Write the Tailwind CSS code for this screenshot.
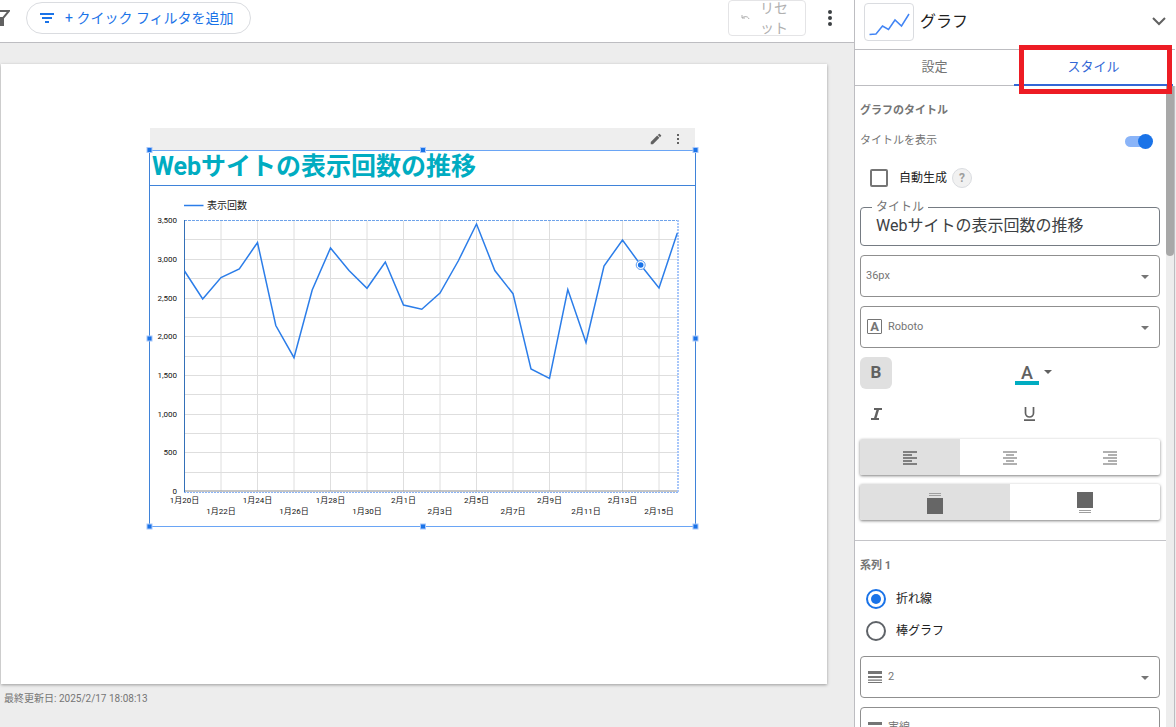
<!DOCTYPE html>
<html lang="ja">
<head>
<meta charset="utf-8">
<title>グラフ - スタイル</title>
<script src="https://cdn.jsdelivr.net/npm/@tailwindcss/browser@4"></script>
</head>
<body class="flex h-screen overflow-hidden bg-[#ededed] font-['Roboto','Noto_Sans_CJK_JP',sans-serif] text-[#757575]">

<main class="flex min-w-0 flex-1 flex-col">
  <header class="flex h-[43px] shrink-0 items-start overflow-hidden border-b border-[#bdbdc1] bg-white">
    <svg class="mt-2 h-5 w-[10px] shrink-0 text-[#616161]" viewBox="0 0 10 20" fill="none" stroke="currentColor" stroke-width="2" aria-hidden="true"><path d="M-4 3H9L3 10V17H-1"/><path d="M0 9H3V18H0Z" fill="currentColor" stroke="none"/></svg>
    <button class="mt-[2px] ml-4 flex h-8 shrink-0 items-center rounded-full border border-[#dadce0] pr-4 pl-[13px] text-sm text-[#1a73e8]">
      <svg class="mr-[11px] h-[10px] w-[14px]" viewBox="0 0 14 10" fill="currentColor" aria-hidden="true"><path d="M0 0h14v2H0zM2 4h10v2H2zM5 8h4v2H5z"/></svg>
      + クイック フィルタを追加
    </button>
    <button class="ml-auto flex h-9 w-[78px] shrink-0 items-center justify-between rounded border border-[#e4e4e6] pr-[17px] pl-3 text-sm leading-5 text-[#b0b0b0]" disabled>
      <svg class="h-2 w-[9px]" viewBox="0 0 9 8" fill="none" stroke="currentColor" aria-hidden="true"><path d="M1 1v3h3M1 4c2-2 6-2 7 1"/></svg>
      <span class="w-7">リセット</span>
    </button>
    <button class="mt-2 mr-[15px] ml-[15px] flex h-5 w-[18px] shrink-0 items-center justify-center" aria-label="その他のオプション">
      <svg class="h-4 w-1" viewBox="0 0 4 16" fill="#3c4043"><circle cx="2" cy="2" r="2"/><circle cx="2" cy="8" r="2"/><circle cx="2" cy="14" r="2"/></svg>
    </button>
  </header>

  <section class="relative mt-[21px] mr-[27px] ml-px h-[620px] shrink-0 bg-white shadow-[0_1px_3px_rgba(0,0,0,0.35)]">
    <!-- Selected widget on the report canvas -->
    <div class="absolute top-16 left-[145px] w-[556px]">
      <div class="mr-[7px] ml-[4px] flex h-[22px] items-center justify-end gap-2 bg-[#eee] pr-[10px]">
        <button aria-label="編集"><svg class="h-[14px] w-[14px]" viewBox="0 0 24 24" fill="#616161"><path d="M3 17.25V21h3.75L17.81 9.94l-3.75-3.75L3 17.25zM20.71 7.04a1 1 0 0 0 0-1.41l-2.34-2.34a1 1 0 0 0-1.41 0l-1.83 1.83 3.75 3.75 1.83-1.83z"/></svg></button>
        <button class="flex h-[14px] w-[14px] items-center justify-center" aria-label="メニュー"><svg class="h-[10px] w-[3px]" viewBox="0 0 3 10" fill="#616161"><path d="M0 0h2v2H0zM0 4h2v2H0zM0 8h2v2H0z"/></svg></button>
      </div>
      <div class="h-9 pl-[6px]"><h1 class="text-[25px] leading-[34px] font-bold text-[#00acc1]">Webサイトの表示回数の推移</h1></div>
      <svg class="absolute top-4 left-0 h-[390px] w-[556px]" viewBox="146 144 556 390" role="img" aria-label="表示回数">
        <path id="grid" fill="none" stroke="#dedede" stroke-width="1"/>
        <path d="M184 491H678" stroke="#8a8a8a" stroke-width="1"/>
        <path d="M184 492.5H678" stroke="#8ab4f8" stroke-dasharray="2 1"/>
        <path d="M184 220.5H678" stroke="#6fa3ea" stroke-dasharray="3 1"/>
        <path d="M678 220V492" stroke="#a8c7fa" stroke-width="2" stroke-dasharray="2 1"/>
        <path d="M184.5 220V492" stroke="#3470b8"/>
        <path d="M184 205.500H203.500" stroke="#2b7de9" stroke-width="1.500"/>
        <text x="207" y="209" font-size="10" fill="#212121">表示回数</text>
        <polyline fill="none" stroke="#2b7de9" stroke-width="1.500" points="184.500,271 202.700,299 221,277.500 239.300,269 257.500,242.500 275.800,325.500 294,357.700 312.200,290 330.500,248 349,270.500 367,288.300 385.300,262 403.500,305 421.800,309.300 440,293 458.500,260.500 476.500,224 494.800,270.500 513,293.700 531,369 549.500,378.500 567.800,289.500 586,342.500 604,266 622.500,240 640.700,265 659,288 677.300,233"/>
        <circle cx="640.700" cy="265" r="4.500" fill="#fff" stroke="#5c9bf0"/><circle cx="640.700" cy="265" r="2.800" fill="#1a73e8"/>
        <g id="ylabels" font-size="8" fill="#111" text-anchor="end"></g>
        <g id="xlabels" font-size="8" fill="#111" text-anchor="middle"></g>
        <g fill="none"><path d="M150 150.500H696M150 526.500H696" stroke="#6aa5f5"/><path d="M150 185.500H696M149.500 150V527M695.500 150V527" stroke="#3f83d9"/></g>
        <g id="handles" fill="#1a73e8" stroke="#a8c7fa"></g>
      </svg>
    </div>
  </section>
  <p class="mt-2 ml-1 text-[10px] leading-[14px]">最終更新日: 2025/2/17 18:08:13</p>
</main>

<aside class="relative flex w-[322px] shrink-0 flex-col border-l border-[#bdbdc1] bg-white">
  <header class="mr-[1px] flex h-[50px] shrink-0 items-center border-b border-[#bdbdc1] pr-[9px] pl-[9px]">
    <svg class="mb-[5px] h-[38px] w-[50px] rounded border border-[#dadce0]" viewBox="0 0 48 36" fill="none" stroke="#4285f4" stroke-width="1.500" aria-hidden="true"><path d="M4.500 30.500L11 30L17.500 22L23.500 25.500L30 16L36.500 22L44 10"/></svg>
    <h2 class="mb-[6px] ml-[6px] flex-1 text-base text-[#212121]">グラフ</h2>
    <button class="mb-[6px]" aria-label="グラフの種類"><svg class="h-[9px] w-[14px]" viewBox="0 0 14 9" fill="none" stroke="#616161" stroke-width="2"><path d="M1 1l6 6 6-6"/></svg></button>
  </header>
  <nav class="mr-[3px] grid h-9 shrink-0 grid-cols-2 border-b border-[#bdbdc1] text-[13px]" role="tablist">
    <button class="pb-[2px]" role="tab">設定</button>
    <button class="-mb-px border-b-2 border-[#3367d6] pb-px text-[#3367d6]" role="tab" aria-selected="true">スタイル</button>
  </nav>
  <div class="pointer-events-none absolute top-[45px] right-[4px] z-10 h-[49px] w-[153px] border-[5px] border-[#ed1c24]"></div>

  <div class="flex min-h-0 flex-1">
    <div class="min-w-0 flex-1 overflow-hidden">
      <section class="pr-[6px] pl-[5px]">
        <h3 class="pt-[17px] text-[11px] leading-4 font-bold">グラフのタイトル</h3>
        <label class="mt-[14px] flex h-4 items-center justify-between pr-[7px] text-[11px]">タイトルを表示
          <span class="relative flex h-4 w-7 items-center">
            <input type="checkbox" role="switch" checked class="h-[11px] w-[26px] appearance-none rounded-full bg-[#8ab4f8]">
            <span class="absolute right-0 h-[15px] w-[15px] rounded-full bg-[#1a73e8]"></span>
          </span>
        </label>
        <div class="mt-[18px] flex h-[22px] items-center pl-[10px]">
          <input id="auto" type="checkbox" class="h-[18px] w-[18px] appearance-none rounded-[2px] border-2 border-[#757575]">
          <label for="auto" class="ml-[11px] text-xs text-[#212121]">自動生成</label>
          <button class="ml-[5px] h-5 w-5 rounded-full border border-[#dadce0] bg-[#f1f1f1] text-xs leading-4 font-bold text-[#9e9e9e]" aria-label="ヘルプ">?</button>
        </div>
        <fieldset class="mt-[10px] h-[47px] rounded border border-[#757b82] pl-[11px]">
          <legend class="px-1 text-xs leading-4"><label for="title">タイトル</label></legend>
          <input id="title" type="text" value="Webサイトの表示回数の推移" class="-mt-[1px] block h-6 w-full px-1 text-base text-[#3c4043] outline-none">
        </fieldset>
        <div class="relative mt-[9px]">
          <select aria-label="フォントサイズ" class="block h-[42px] w-full appearance-none rounded border border-[#8f8f8f] pl-[5px] text-[11px]"><option>36px</option></select>
          <svg class="pointer-events-none absolute top-5 right-[11px] h-1 w-2" viewBox="0 0 8 4" fill="#757575"><path d="M0 0h8L4 4z"/></svg>
        </div>
        <div class="relative mt-[9px]">
          <select aria-label="フォント" class="block h-[42px] w-full appearance-none rounded border border-[#8f8f8f] pl-[27px] text-[11px]"><option>Roboto</option></select>
          <span class="pointer-events-none absolute top-[13px] left-[7px] flex h-[15px] w-[15px] items-center justify-center rounded-[1px] border border-[#757575] text-[13px] leading-none font-bold" aria-hidden="true">A</span>
          <svg class="pointer-events-none absolute top-5 right-[11px] h-1 w-2" viewBox="0 0 8 4" fill="#757575"><path d="M0 0h8L4 4z"/></svg>
        </div>
        <div class="mt-[9px] grid grid-cols-2 gap-y-[9px] text-[#616161]">
          <button class="h-8 w-8 rounded-md bg-[#e0e0e0] text-[17px] font-bold" aria-label="太字" aria-pressed="true">B</button>
          <button class="flex h-8 w-12 items-start gap-[5px] pl-[5px]" aria-label="文字色">
            <span class="mt-[7px] h-[21px] w-6 border-b-4 border-[#00acc1] text-center text-[18px] leading-[18px] font-medium">A</span>
            <svg class="mt-[13px] h-1 w-2" viewBox="0 0 8 4" fill="#616161"><path d="M0 0h8L4 4z"/></svg>
          </button>
          <button class="flex h-8 w-8 items-center justify-center" aria-label="斜体"><svg class="h-3 w-[11px]" viewBox="0 0 11 12" fill="none" stroke="currentColor" stroke-width="2"><path d="M3 1h8M0 11h8"/><path d="M7 1L4 11" stroke-width="2.500"/></svg></button>
          <button class="flex h-8 w-[38px] items-center justify-center" aria-label="下線"><svg class="h-[14px] w-[11px]" viewBox="0 0 11 14" fill="none" stroke="currentColor" stroke-width="1.700"><path d="M1.500 0v6a4 4 0 0 0 8 0V0M0 13.200h11"/></svg></button>
        </div>
        <div class="mt-[9px] grid h-9 grid-cols-3 overflow-hidden rounded-[2px] shadow-[0_1px_3px_rgba(0,0,0,0.5)]">
          <button class="flex items-center justify-center bg-[#e0e0e0] text-[#808080]" aria-label="左揃え" aria-pressed="true"><svg class="mt-[2px] h-[14px] w-[14px]" viewBox="0 0 14 14" fill="currentColor"><path d="M0 0h14v2H0zM0 3h9v2H0zM0 6h14v2H0zM0 9h9v2H0zM0 12h14v2H0z"/></svg></button>
          <button class="flex items-center justify-center text-[#b0b0b0]" aria-label="中央揃え"><svg class="mt-[2px] h-[14px] w-[14px]" viewBox="0 0 14 14" fill="currentColor"><path d="M0 0h14v2H0zM3 3h8v2H3zM0 6h14v2H0zM3 9h8v2H3zM0 12h14v2H0z"/></svg></button>
          <button class="flex items-center justify-center text-[#b0b0b0]" aria-label="右揃え"><svg class="mt-[2px] h-[14px] w-[14px]" viewBox="0 0 14 14" fill="currentColor"><path d="M0 0h14v2H0zM5 3h9v2H5zM0 6h14v2H0zM5 9h9v2H5zM0 12h14v2H0z"/></svg></button>
        </div>
        <div class="mt-[9px] grid h-9 grid-cols-2 overflow-hidden rounded-[2px] shadow-[0_1px_3px_rgba(0,0,0,0.5)]">
          <button class="flex items-center justify-center bg-[#e0e0e0]" aria-label="上" aria-pressed="true"><svg class="mt-[3px] h-[21px] w-4" viewBox="0 0 16 21"><path d="M0 5h16v16H0z" fill="#666"/><path d="M2 0h12v1H2zM2 2h12v1H2z" fill="#9e9e9e"/></svg></button>
          <button class="flex items-center justify-center" aria-label="下"><svg class="h-[21px] w-4" viewBox="0 0 16 21"><path d="M0 0h16v16H0z" fill="#666"/><path d="M2 18h12v1H2zM2 20h12v1H2z" fill="#9e9e9e"/></svg></button>
        </div>
      </section>
      <section class="mt-[20px] border-t border-[#c4c4c8] pr-[6px] pl-[5px]">
        <h3 class="pt-[17px] text-[11px] leading-4 font-bold">系列 1</h3>
        <div class="mt-[15px] flex flex-col gap-3 pl-[6px] text-xs text-[#212121]">
          <label class="flex h-5 items-center gap-[10px]"><input type="radio" name="kind" checked class="h-5 w-5 appearance-none rounded-full border-2 border-[#1a73e8] bg-[#1a73e8] bg-clip-content p-[3px]">折れ線</label>
          <label class="flex h-5 items-center gap-[10px]"><input type="radio" name="kind" class="h-5 w-5 appearance-none rounded-full border-2 border-[#5f6368]">棒グラフ</label>
        </div>
        <div class="relative mt-[15px]">
          <select aria-label="線の太さ" class="block h-[42px] w-full appearance-none rounded border border-[#8f8f8f] pl-[27px] text-[11px]"><option>2</option></select>
          <svg class="pointer-events-none absolute top-[15px] left-2 h-3 w-[14px]" viewBox="0 0 14 12" fill="#757575"><path d="M0 0h14v3H0zM0 5h14v2H0zM0 8.500h14v1.200H0zM0 11h14v1H0z"/></svg>
          <svg class="pointer-events-none absolute top-5 right-[11px] h-1 w-2" viewBox="0 0 8 4" fill="#757575"><path d="M0 0h8L4 4z"/></svg>
        </div>
        <div class="relative mt-[9px]">
          <select aria-label="線の種類" class="block h-[42px] w-full appearance-none rounded border border-[#8f8f8f] pl-[27px] text-[11px]"><option>実線</option></select>
          <svg class="pointer-events-none absolute top-[15px] left-2 h-3 w-[14px]" viewBox="0 0 14 12" fill="#757575"><path d="M0 0h14v3H0zM0 5h14v2H0zM0 8.500h14v1.200H0z"/></svg>
          <svg class="pointer-events-none absolute top-5 right-[11px] h-1 w-2" viewBox="0 0 8 4" fill="#757575"><path d="M0 0h8L4 4z"/></svg>
        </div>
      </section>
    </div>
    <div class="w-2 shrink-0 bg-[#ededed]"><div class="h-[170px] rounded-b bg-[#a8a8a8]"></div></div>
    <div class="w-[2px] shrink-0 border-l border-[#bdbdc1] bg-[#ededed]"></div>
  </div>
</aside>

<script>
const NS = 'http://www.w3.org/2000/svg';
function add(parent, tag, attrs, text) {
  const el = document.createElementNS(NS, tag);
  for (const k in attrs) el.setAttribute(k, attrs[k]);
  if (text) el.textContent = text;
  document.getElementById(parent).appendChild(el);
}
let d = '';
for (let i = 1; i < 14; i++) {
  const x = 184.5 + i * 36.5;
  d += `M${x} 221V491`;
  d += `M185 ${Math.round(491 - i * 19.35) + 0.5}H678`;
}
document.getElementById('grid').setAttribute('d', d);
['0', '500', '1,000', '1,500', '2,000', '2,500', '3,000', '3,500'].forEach((t, i) =>
  add('ylabels', 'text', { x: 177, y: Math.round(494 - i * 38.7) }, t));
['1月20日', '1月22日', '1月24日', '1月26日', '1月28日', '1月30日', '2月1日', '2月3日', '2月5日', '2月7日', '2月9日', '2月11日', '2月13日', '2月15日'].forEach((t, i) =>
  add('xlabels', 'text', { x: 184.5 + i * 36.5, y: i % 2 ? 514 : 503 }, t));
[[149.5, 150], [423, 150], [695.5, 150], [149.5, 338.5], [695.5, 338.5], [149.5, 526.5], [423, 526.5], [695.5, 526.5]].forEach(([x, y]) =>
  add('handles', 'rect', { x: x - 2.5, y: y - 2.5, width: 5, height: 5 }));
</script>
</body>
</html>
